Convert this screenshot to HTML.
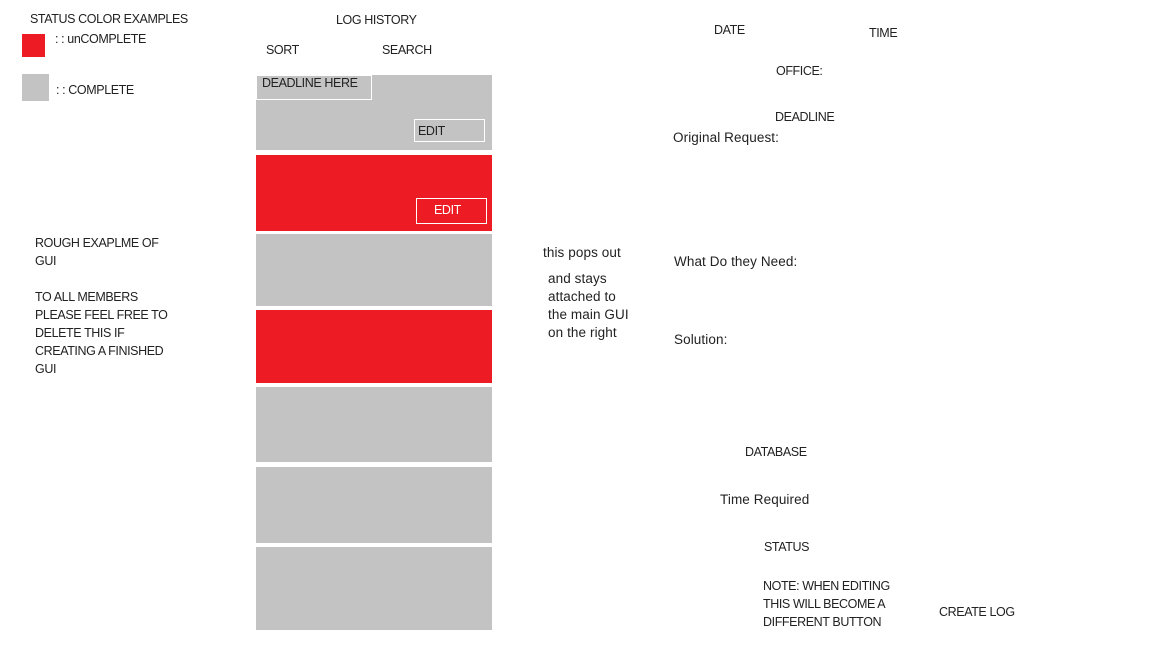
<!DOCTYPE html>
<html><head><style>
body{margin:0;width:1152px;height:648px;background:#fff;position:relative;overflow:hidden;font-family:"Liberation Sans",sans-serif;font-size:12.5px;color:#222;letter-spacing:-0.4px}
.t{position:absolute;white-space:nowrap}
.m{font-size:13.5px;letter-spacing:0.1px}
.b{position:absolute;left:256px;width:236px}
.g{background:#c3c3c3}.r{background:#ed1c24}
.bx{position:absolute;border:1px solid #fff;box-sizing:border-box}
</style></head><body>
<div class="t" style="left:30px;top:12px">STATUS COLOR EXAMPLES</div>
<div class="r" style="position:absolute;left:22px;top:34px;width:23px;height:23px"></div>
<div class="t" style="left:55px;top:32px">: : unCOMPLETE</div>
<div class="g" style="position:absolute;left:22px;top:74px;width:27px;height:27px"></div>
<div class="t" style="left:56px;top:83px">: : COMPLETE</div>
<div class="t" style="left:336px;top:13px">LOG HISTORY</div>
<div class="t" style="left:266px;top:43px">SORT</div>
<div class="t" style="left:382px;top:43px">SEARCH</div>
<div class="b g" style="top:75px;height:75px"></div>
<div class="bx" style="left:256px;top:75px;width:116px;height:25px"></div>
<div class="t" style="left:262px;top:76px">DEADLINE HERE</div>
<div class="bx" style="left:414px;top:119px;width:71px;height:23px"></div>
<div class="t" style="left:418px;top:124px">EDIT</div>
<div class="b r" style="top:155px;height:76px"></div>
<div class="bx" style="left:416px;top:198px;width:71px;height:26px"></div>
<div class="t" style="left:434px;top:203px;color:#fff">EDIT</div>
<div class="b g" style="top:234px;height:72px"></div>
<div class="b r" style="top:310px;height:73px"></div>
<div class="b g" style="top:387px;height:75px"></div>
<div class="b g" style="top:467px;height:76px"></div>
<div class="b g" style="top:547px;height:83px"></div>
<div class="t" style="left:35px;top:234px;line-height:18px">ROUGH EXAPLME OF<br>GUI</div>
<div class="t" style="left:35px;top:288px;line-height:18px">TO ALL MEMBERS<br>PLEASE FEEL FREE TO<br>DELETE THIS IF<br>CREATING A FINISHED<br>GUI</div>
<div class="t m" style="left:543px;top:245px">this pops out</div>
<div class="t m" style="left:548px;top:270px;line-height:18px">and stays<br>attached to<br>the main GUI<br>on the right</div>
<div class="t" style="left:714px;top:23px">DATE</div>
<div class="t" style="left:869px;top:26px">TIME</div>
<div class="t" style="left:776px;top:64px">OFFICE:</div>
<div class="t" style="left:775px;top:110px">DEADLINE</div>
<div class="t m" style="left:673px;top:130px">Original Request:</div>
<div class="t m" style="left:674px;top:254px">What Do they Need:</div>
<div class="t m" style="left:674px;top:332px">Solution:</div>
<div class="t" style="left:745px;top:445px">DATABASE</div>
<div class="t m" style="left:720px;top:492px">Time Required</div>
<div class="t" style="left:764px;top:540px">STATUS</div>
<div class="t" style="left:763px;top:577px;line-height:18px">NOTE: WHEN EDITING<br>THIS WILL BECOME A<br>DIFFERENT BUTTON</div>
<div class="t" style="left:939px;top:605px">CREATE LOG</div>
</body></html>
